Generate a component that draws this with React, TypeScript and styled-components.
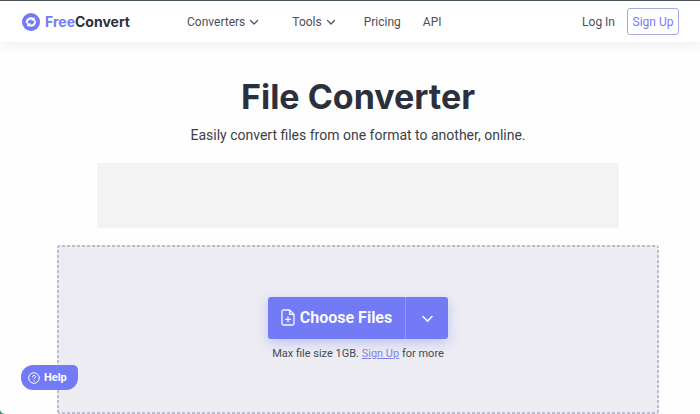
import React from "react";
import styled, { createGlobalStyle } from "styled-components";

const accent = "#727af5";
const dash = "#bdbbd0";

const GlobalStyle = createGlobalStyle`
  * { box-sizing: border-box; }
  html { background: #4f8082; }
  body {
    margin: 0;
    color: #2c303d;
    font-family: Roboto, "Liberation Sans", sans-serif;
    overflow: hidden;
  }
  button { font: inherit; cursor: pointer; }
`;

const Page = styled.div`
  display: flex;
  flex-direction: column;
  min-height: 100vh;
  background: #fefefe;
  border-top: 1px solid #4d585d;
  border-bottom-left-radius: 5px;
`;

const Header = styled.header`
  display: flex;
  align-items: center;
  height: 41px;
  padding: 0 21px 0 22px;
  background: #fff;
  box-shadow: 0 2px 16px rgba(0, 0, 0, 0.08);
`;

const Brand = styled.a`
  display: flex;
  align-items: center;
  gap: 5px;
  width: 165px;
  color: #2c303d;
  font-family: Inter, sans-serif;
  font-size: 14px;
  font-weight: 700;
  line-height: 20px;
  text-decoration: none;
`;

const BrandTint = styled.span`
  color: ${accent};
`;

const Nav = styled.nav`
  display: flex;
  flex: 1;
  align-items: center;
  gap: 33px;
`;

const navText = `
  color: #4b4f55;
  font-size: 12px;
  line-height: 18px;
`;

const NavMenu = styled.button`
  ${navText}
  display: flex;
  align-items: center;
  gap: 4px;
  padding: 0;
  border: 0;
  background: none;
`;

const NavLinks = styled.div`
  display: flex;
  gap: 22px;
  margin-left: -5px;
`;

const NavLink = styled.a`
  ${navText}
  text-decoration: none;
`;

const Account = styled.div`
  display: flex;
  align-items: center;
  gap: 12px;
`;

const SignUpButton = styled.button`
  width: 52px;
  height: 27px;
  padding: 0;
  border: 1px solid #a5a9dc;
  border-radius: 3px;
  background: #fff;
  color: ${accent};
  font-size: 12px;
`;

const Main = styled.main`
  display: flex;
  flex: 1;
  flex-direction: column;
  align-items: center;
  padding: 35px 41px 0 57px;
`;

const Title = styled.h1`
  margin: 0;
  font-family: Inter, sans-serif;
  font-size: 34px;
  font-weight: 700;
  line-height: 40px;
`;

const Subtitle = styled.p`
  margin: 8px 0 18px;
  color: #3b3f48;
  font-size: 14px;
  line-height: 20px;
`;

const Banner = styled.div`
  align-self: stretch;
  height: 65px;
  margin: 0 40px 17px;
  background: #f3f3f3;
`;

const DropZone = styled.section`
  display: flex;
  flex: 1;
  flex-direction: column;
  align-items: center;
  align-self: stretch;
  padding-top: 52px;
  border-radius: 3px;
  background:
    repeating-linear-gradient(90deg, ${dash} 0 3px, transparent 3px 5px) top / 100% 2px no-repeat,
    repeating-linear-gradient(90deg, ${dash} 0 3px, transparent 3px 5px) bottom / 100% 2px no-repeat,
    repeating-linear-gradient(${dash} 0 3px, transparent 3px 5px) left / 2px 100% no-repeat,
    repeating-linear-gradient(${dash} 0 3px, transparent 3px 5px) right / 2px 100% no-repeat,
    #edecf3;
`;

const Chooser = styled.div`
  display: flex;
  height: 42px;
  border-radius: 3px;
  background: ${accent};
  box-shadow: 0 4px 12px rgba(114, 140, 245, 0.4);
`;

const ChooseButton = styled.button`
  display: flex;
  align-items: center;
  justify-content: center;
  gap: 5px;
  width: 137px;
  padding: 0 0 1px;
  border: 0;
  background: none;
  color: #f8f8ff;
  font-size: 16px;
  font-weight: 700;
`;

const SourceButton = styled.button`
  display: flex;
  align-items: center;
  justify-content: center;
  width: 43px;
  padding: 0;
  border: 0;
  border-left: 1px solid #9298f8;
  background: none;
  color: #f8f8ff;
`;

const Hint = styled.p`
  margin: 6px 0 0;
  color: #454954;
  font-size: 11px;
  line-height: 18px;
`;

const HintLink = styled.a`
  color: #7d80de;
`;

const HelpButton = styled.button`
  position: fixed;
  bottom: 24px;
  left: 21px;
  display: flex;
  align-items: center;
  gap: 4px;
  height: 25px;
  padding: 0 11px 0 7px;
  border: 0;
  border-radius: 12px 5px 12px 12px;
  background: ${accent};
  color: #fff;
  font-size: 11px;
  font-weight: 700;
`;

const Chevron = ({ size }: { size: number }) => (
  <svg width={size} height={size} viewBox="0 0 10 10" fill="none" stroke="currentColor" strokeWidth="1.2" strokeLinecap="round" strokeLinejoin="round" aria-hidden="true">
    <path d="M1.5 3.5 5 7l3.5-3.5" />
  </svg>
);

const Logo = () => (
  <svg width="18" height="18" viewBox="0 0 18 18" fill="none" aria-hidden="true">
    <circle cx="9" cy="9" r="9" fill={accent} />
    <g fill="#fff">
      <path d="M3.8 10.2C3.5 6.8 6 4.3 9 4.3c1 0 1.8.2 2.6.7l1-.9.4 3.9-4-.4 1.1-1C7.800 5.900 5.700 7.700 5.600 10.200z" />
      <path d="M14.2 7.800C14.500 11.200 12 13.700 9 13.700c-1 0-1.800-.2-2.600-.7l-1 .9-.4-3.900 4 .4-1.100 1C10.200 12.100 12.300 10.300 12.400 7.800z" />
    </g>
  </svg>
);

const FilePlus = () => (
  <svg width="14" height="17" viewBox="0 0 14 17" fill="none" stroke="currentColor" strokeWidth="1.3" strokeLinecap="round" strokeLinejoin="round" aria-hidden="true">
    <path d="M8.6 1H2.4C1.6 1 1 1.6 1 2.4v12.2c0 .8.6 1.4 1.4 1.4h9.200c.8 0 1.400-.6 1.400-1.400V5.400zM8.600 1v4.400H13M7 7.800v5M4.500 10.300h5" />
  </svg>
);

const HelpIcon = () => (
  <svg width="12" height="12" viewBox="0 0 12 12" fill="none" stroke="currentColor" strokeLinecap="round" aria-hidden="true">
    <circle cx="6" cy="6" r="5.3" />
    <path d="M4.5 4.8a1.5 1.5 0 1 1 2.3 1.2c-.5.3-.8.5-.8 1" />
    <circle cx="6" cy="8.8" r=".6" fill="currentColor" stroke="none" />
  </svg>
);

export default function App() {
  return (
    <Page>
      <GlobalStyle />
      <Header>
        <Brand href="#">
          <Logo />
          <span><BrandTint>Free</BrandTint>Convert</span>
        </Brand>
        <Nav>
          <NavMenu type="button">Converters <Chevron size={10} /></NavMenu>
          <NavMenu type="button">Tools <Chevron size={10} /></NavMenu>
          <NavLinks>
            <NavLink href="#">Pricing</NavLink>
            <NavLink href="#">API</NavLink>
          </NavLinks>
        </Nav>
        <Account>
          <NavLink href="#">Log In</NavLink>
          <SignUpButton type="button">Sign Up</SignUpButton>
        </Account>
      </Header>
      <Main>
        <Title>File Converter</Title>
        <Subtitle>Easily convert files from one format to another, online.</Subtitle>
        <Banner />
        <DropZone>
          <Chooser>
            <ChooseButton type="button"><FilePlus />Choose Files</ChooseButton>
            <SourceButton type="button" aria-label="More file sources"><Chevron size={13} /></SourceButton>
          </Chooser>
          <Hint>Max file size 1GB. <HintLink href="#">Sign Up</HintLink> for more</Hint>
        </DropZone>
      </Main>
      <HelpButton type="button"><HelpIcon />Help</HelpButton>
    </Page>
  );
}
